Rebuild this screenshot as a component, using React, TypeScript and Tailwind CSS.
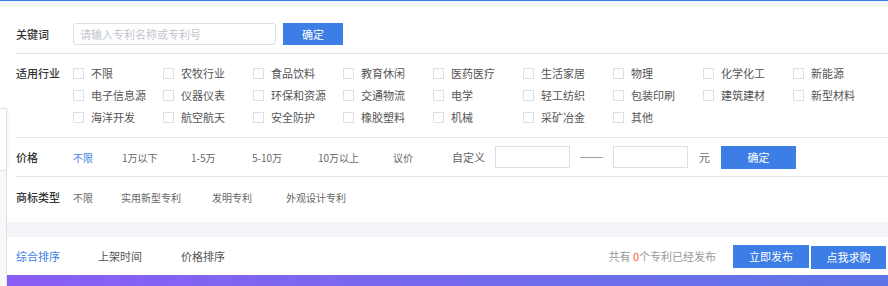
import React from "react";

const industries = [
    "不限", "农牧行业", "食品饮料", "教育休闲", "医药医疗", "生活家居", "物理", "化学化工", "新能源",
    "电子信息源", "仪器仪表", "环保和资源", "交通物流", "电学", "轻工纺织", "包装印刷", "建筑建材", "新型材料",
    "海洋开发", "航空航天", "安全防护", "橡胶塑料", "机械", "采矿冶金", "其他",
];

const prices = [
    { label: "不限", w: "w-[49px]", active: true },
    { label: "1万以下", w: "w-[69px]" },
    { label: "1-5万", w: "w-[61px]" },
    { label: "5-10万", w: "w-[66px]" },
    { label: "10万以上", w: "w-[75px]" },
    { label: "议价", w: "w-[59px]" },
];

const types = [
    { label: "不限", w: "w-[48px]" },
    { label: "实用新型专利", w: "w-[91px]" },
    { label: "发明专利", w: "w-[74px]" },
    { label: "外观设计专利", w: "w-[80px]" },
];

const Label = ({ children }: { children: React.ReactNode }) => (
    <div className="w-[57px] shrink-0 text-[11px] font-medium text-[#333]">{children}</div>
);

export default function App() {
    return (
        <div
            className="relative h-[286px] w-full overflow-hidden border-t border-[#3b7ee6] bg-[#f3f4f8]"
            style={{ fontFamily: '"Noto Sans CJK SC", "Noto Sans", sans-serif' }}
        >
            <div className="mt-[6px] bg-white pl-4">
                {/* keyword */}
                <div className="flex items-center border-b border-[#e4e4e4] pt-4 pb-2">
                    <Label>关键词</Label>
                    <input
                        className="h-[22px] w-[203px] rounded-[3px] border border-[#dcdfe6] px-[6px] text-[11px] outline-none placeholder:text-[#c0c4cc]"
                        placeholder="请输入专利名称或专利号"
                    />
                    <button className="ml-[7px] h-[22px] w-[60px] bg-[#3d7ee6] text-[11px] text-white">确定</button>
                </div>

                {/* industry */}
                <div className="flex border-b border-[#e4e4e4] pt-2 pb-[9px]">
                    <div className="flex h-[22px] items-center">
                        <Label>适用行业</Label>
                    </div>
                    <div className="grid grid-cols-[repeat(9,90px)]">
                        {industries.map((name) => (
                            <div key={name} className="flex h-[22px] items-center gap-[7px] whitespace-nowrap">
                                <span className="h-[11px] w-[11px] shrink-0 border border-[#dcdfe6] bg-white" />
                                <span className="text-[11px] text-[#555]">{name}</span>
                            </div>
                        ))}
                    </div>
                </div>

                {/* price */}
                <div className="flex h-[39px] items-center border-b border-[#e4e4e4]">
                    <Label>价格</Label>
                    {prices.map((p) => (
                        <div
                            key={p.label}
                            className={`${p.w} shrink-0 text-[10px] ${p.active ? "text-[#3d7ee6]" : "text-[#666]"}`}
                        >
                            {p.label}
                        </div>
                    ))}
                    <span className="text-[11px] text-[#666]">自定义</span>
                    <input className="ml-[10px] h-[22px] w-[75px] border border-[#dcdfe6] outline-none" />
                    <span className="mx-[10px] w-[23px] overflow-hidden whitespace-nowrap font-['Liberation_Sans'] text-[11.5px] text-[#888]">
                        ——
                    </span>
                    <input className="h-[22px] w-[75px] border border-[#dcdfe6] outline-none" />
                    <span className="ml-[11px] text-[11px] text-[#666]">元</span>
                    <button className="ml-[11px] h-[23px] w-[75px] bg-[#3d7ee6] text-[11px] text-white">确定</button>
                </div>

                {/* type */}
                <div className="flex h-[45px] items-center pb-[5px]">
                    <Label>商标类型</Label>
                    {types.map((t) => (
                        <div key={t.label} className={`${t.w} shrink-0 text-[10px] text-[#666]`}>
                            {t.label}
                        </div>
                    ))}
                </div>
            </div>

            {/* bottom */}
            <div className="ml-[6px]">
                <div className="h-[15px] bg-[#f3f4f8]" />
                <div className="flex h-[38px] items-center bg-white pl-[10px] pr-[2px]">
                    <div className="flex text-[11px] text-[#555]">
                        <span className="w-[82px] text-[#3d7ee6]">综合排序</span>
                        <span className="w-[83px]">上架时间</span>
                        <span>价格排序</span>
                    </div>
                    <div className="ml-auto flex items-center">
                        <span className="mr-[17px] text-[11px] text-[#999]">
                            共有 <span className="text-[#ff5a3c]">0</span>个专利已经发布
                        </span>
                        <button className="h-[23px] w-[76px] bg-[#3d7ee6] text-[11px] text-white">立即发布</button>
                        <button className="mt-[2px] ml-[2px] h-[23px] w-[75px] bg-[#3d7ee6] text-[11px] text-white">点我求购</button>
                    </div>
                </div>
                <div className="h-[11px] bg-gradient-to-r from-[#8a5ef6] to-[#5d74e6]" />
            </div>

            {/* side overlay */}
            <div className="absolute top-[107px] bottom-0 left-0 flex w-[7px] flex-col">
                <div className="h-[63px] border-y border-r border-[#e2e2e2] bg-white shadow-[1px_0_3px_rgba(0,0,0,0.06)]" />
                <div className="flex-1 border-r border-[#e2e2e2] bg-[#f8f8f8]" />
            </div>
        </div>
    );
}
